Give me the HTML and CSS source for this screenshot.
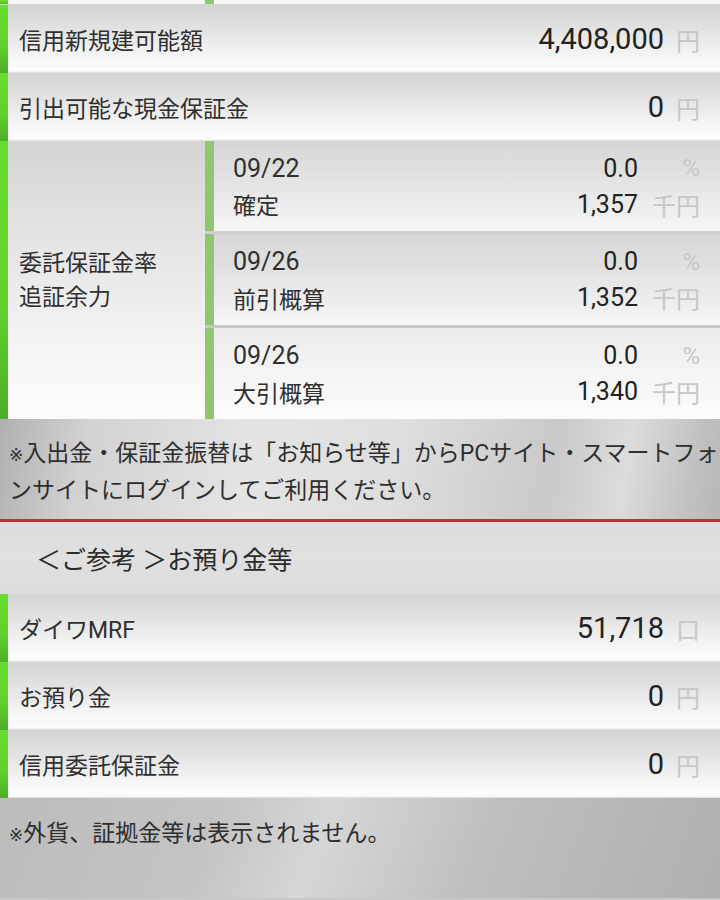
FILE: index.html
```html
<!DOCTYPE html>
<html lang="ja">
<head>
<meta charset="utf-8">
<title>余力</title>
<link rel="stylesheet" href="styles.css">
</head>
<body>
<div class="screen">
  <div class="strip">
    <span class="bar"></span>
    <span class="strip-lab"></span>
    <span class="subbar"></span>
    <span class="strip-rest"></span>
  </div>

  <div class="row">
    <span class="bar"></span>
    <div class="cell">
      <span class="label">信用新規建可能額</span>
      <span class="val">4,408,000</span>
      <span class="unit">円</span>
    </div>
  </div>
  <div class="row">
    <span class="bar"></span>
    <div class="cell">
      <span class="label">引出可能な現金保証金</span>
      <span class="val">0</span>
      <span class="unit">円</span>
    </div>
  </div>

  <div class="group">
    <span class="bar"></span>
    <div class="glabel">委託保証金率<br>追証余力</div>
    <div class="subs">
      <div class="sub">
        <span class="subbar"></span>
        <div class="subcell">
          <div class="line"><span class="txt">09/22</span><span class="num">0.0</span><span class="sunit">%</span></div>
          <div class="line"><span class="txt">確定</span><span class="num">1,357</span><span class="sunit">千円</span></div>
        </div>
      </div>
      <div class="sub">
        <span class="subbar"></span>
        <div class="subcell">
          <div class="line"><span class="txt">09/26</span><span class="num">0.0</span><span class="sunit">%</span></div>
          <div class="line"><span class="txt">前引概算</span><span class="num">1,352</span><span class="sunit">千円</span></div>
        </div>
      </div>
      <div class="sub">
        <span class="subbar"></span>
        <div class="subcell">
          <div class="line"><span class="txt">09/26</span><span class="num">0.0</span><span class="sunit">%</span></div>
          <div class="line"><span class="txt">大引概算</span><span class="num">1,340</span><span class="sunit">千円</span></div>
        </div>
      </div>
    </div>
  </div>

  <div class="note note-top">
    <span class="mark">※</span>入出金・保証金振替は「お知らせ等」からPCサイト・スマートフォ<br>ンサイトにログインしてご利用ください。
  </div>

  <div class="header">＜ご参考 ＞お預り金等</div>

  <div class="row">
    <span class="bar"></span>
    <div class="cell">
      <span class="label">ダイワMRF</span>
      <span class="val">51,718</span>
      <span class="unit">口</span>
    </div>
  </div>
  <div class="row">
    <span class="bar"></span>
    <div class="cell">
      <span class="label">お預り金</span>
      <span class="val">0</span>
      <span class="unit">円</span>
    </div>
  </div>
  <div class="row">
    <span class="bar"></span>
    <div class="cell">
      <span class="label">信用委託保証金</span>
      <span class="val">0</span>
      <span class="unit">円</span>
    </div>
  </div>

  <div class="note note-bottom">
    <span class="mark">※</span>外貨、証拠金等は表示されません。
  </div>
</div>
</body>
</html>
```

FILE: styles.css
```css
html, body {
  margin: 0;
  padding: 0;
}
body {
  width: 720px;
  height: 900px;
  overflow: hidden;
  font-family: Roboto, "Noto Sans CJK JP", sans-serif;
  color: #2f2f2f;
  background: #c8c8c8;
}
.screen {
  width: 720px;
  display: flex;
  flex-direction: column;
}

.bar {
  width: 8px;
  flex: 0 0 8px;
  background: linear-gradient(to bottom, #66de2f 0%, #5fd22c 60%, #4cae29 100%);
}
.subbar {
  width: 9px;
  flex: 0 0 9px;
  background: #8fc672;
}

/* top leftover strip */
.strip {
  height: 4px;
  display: flex;
  border-bottom: 1px solid #d2d2d2;
}
.strip-lab {
  width: 197px;
  background: #f7f7f7;
}
.strip-rest {
  flex: 1;
  background: #f7f7f7;
}

/* simple rows */
.row {
  height: 68px;
  display: flex;
}
.cell {
  flex: 1;
  display: flex;
  align-items: center;
  padding: 0 20px 0 11px;
  background: linear-gradient(to bottom, #d3d3d3 0%, #e2e2e2 35%, #f3f3f3 70%, #fcfcfc 97%, #dadada 100%);
}
.label {
  font-size: 23px;
  color: #2f2f2f;
}
.val {
  margin-left: auto;
  font-size: 29px;
  color: #222;
}
.unit {
  margin-left: 12px;
  font-size: 24px;
  color: #c6c6c6;
}

/* grouped row */
.group {
  height: 278px;
  display: flex;
}
.glabel {
  width: 197px;
  flex: 0 0 197px;
  padding-left: 11px;
  display: flex;
  align-items: center;
  font-size: 23px;
  line-height: 34px;
  padding-top: 2px;
  box-sizing: border-box;
  background: linear-gradient(to bottom, #d4d4d4 0%, #e6e6e6 40%, #f6f6f6 80%, #fcfcfc 100%);
}
.subs {
  flex: 1;
  display: flex;
  flex-direction: column;
  gap: 3px;
  background: linear-gradient(to bottom, #f4f4f4 0%, #c8c8c8 40%, #c8c8c8 100%);
}
.sub {
  flex: 1;
  display: flex;
}
.sub:first-child {
  flex: 0 0 90px;
}
.subcell {
  flex: 1;
  display: flex;
  flex-direction: column;
  justify-content: center;
  padding: 0 20px 0 19px;
  background: linear-gradient(to bottom, #d6d6d6 0%, #e2e2e2 40%, #efefef 80%, #f7f7f7 100%);
}
.sub:last-child .subcell {
  background: linear-gradient(to bottom, #ececec 0%, #f4f4f4 50%, #fcfcfc 100%);
}
.line {
  height: 34px;
  display: flex;
  align-items: center;
}
.txt {
  font-size: 23px;
  color: #2f2f2f;
}
.line:first-child .txt {
  font-size: 25px;
}
.line:last-child {
  margin-top: 2px;
}
.num {
  margin-left: auto;
  font-size: 25px;
  color: #222;
}
.sunit {
  width: 62px;
  text-align: right;
  font-size: 24px;
  color: #c6c6c6;
}

/* notes */
.note {
  box-sizing: border-box;
  padding-left: 9px;
  font-size: 23px;
  line-height: 36px;
  white-space: nowrap;
  overflow: hidden;
  color: #2e2e2e;
}
.mark {
  font-family: "DejaVu Sans", sans-serif;
  font-size: 17px;
}
.note-top {
  height: 103px;
  padding-top: 17px;
  background: linear-gradient(100deg, #b0b0b0 0%, #d2d2d2 12%, #e4e4e4 35%, #dedede 55%, #c9c9c9 76%, #dcdcdc 86%, #c2c2c2 95%, #b6b6b6 100%);
  border-bottom: 3px solid #b23636;
}
.header {
  height: 72px;
  display: flex;
  align-items: center;
  padding-left: 36px;
  font-size: 25px;
  color: #2a2a2a;
  background: linear-gradient(to bottom, #dcdcdc 0%, #e0e0e0 50%, #dcdcdc 100%);
  box-sizing: border-box;
}
.note-bottom {
  height: 100px;
  padding-top: 18px;
  background: linear-gradient(110deg, #bcbcbc 0%, #c4c4c4 30%, #d6d6d6 44%, #cecece 52%, #bfbfbf 66%, #afafaf 100%);
}
```
